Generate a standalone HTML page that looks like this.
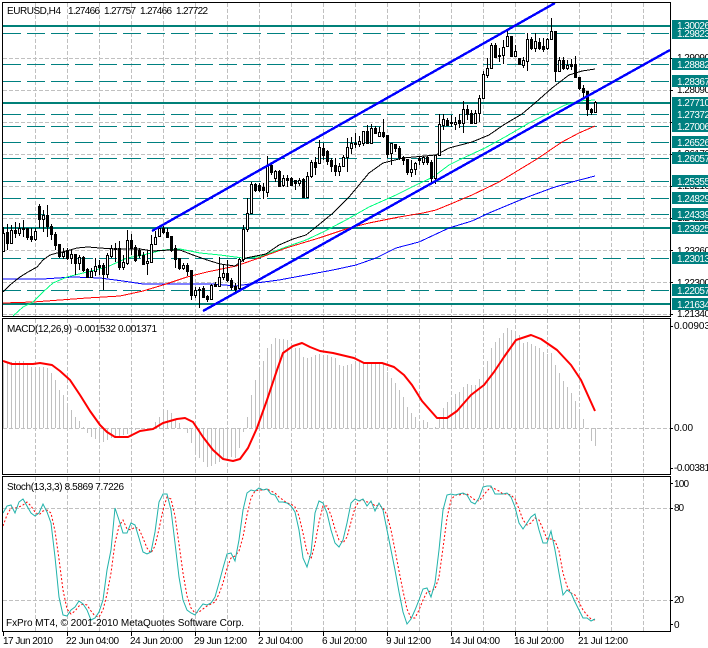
<!DOCTYPE html>
<html><head><meta charset="utf-8"><title>EURUSD,H4</title>
<style>html,body{margin:0;padding:0;background:#fff}svg{display:block}text{font-family:"Liberation Sans",sans-serif;font-size:10px;fill:#000}</style></head>
<body>
<svg width="708" height="648" viewBox="0 0 708 648" xmlns="http://www.w3.org/2000/svg">
<rect width="708" height="648" fill="#fff"/>
<!-- grid -->
<g stroke="#c0c0c0" fill="none" stroke-dasharray="4 2" shape-rendering="crispEdges">
<path d="M35.5 3V316M67.5 3V316M99.5 3V316M131.5 3V316M163.5 3V316M195.5 3V316M227.5 3V316M259.5 3V316M291.5 3V316M323.5 3V316M355.5 3V316M387.5 3V316M419.5 3V316M451.5 3V316M483.5 3V316M515.5 3V316M547.5 3V316M579.5 3V316M611.5 3V316M643.5 3V316"/>
<path d="M35.5 319V474M67.5 319V474M99.5 319V474M131.5 319V474M163.5 319V474M195.5 319V474M227.5 319V474M259.5 319V474M291.5 319V474M323.5 319V474M355.5 319V474M387.5 319V474M419.5 319V474M451.5 319V474M483.5 319V474M515.5 319V474M547.5 319V474M579.5 319V474M611.5 319V474M643.5 319V474"/>
<path d="M35.5 477V631M67.5 477V631M99.5 477V631M131.5 477V631M163.5 477V631M195.5 477V631M227.5 477V631M259.5 477V631M291.5 477V631M323.5 477V631M355.5 477V631M387.5 477V631M419.5 477V631M451.5 477V631M483.5 477V631M515.5 477V631M547.5 477V631M579.5 477V631M611.5 477V631M643.5 477V631"/>
<path d="M3 58.5H670M3 90.5H670M3 122.5H670M3 154.5H670M3 186.5H670M3 218.5H670M3 250.5H670M3 282.5H670M3 314.5H670M3 428.5H670M3 508.5H670M3 600.5H670"/>
</g>
<!-- teal levels -->
<g fill="#008078"><rect x="3" y="25" width="667" height="2"/><rect x="3" y="102" width="667" height="2"/><rect x="3" y="227" width="667" height="2"/><rect x="3" y="303" width="667" height="2"/></g>
<path stroke="#008080" fill="none" stroke-dasharray="18 6" shape-rendering="crispEdges" d="M3 33.5H670M3 64.5H670M3 81.5H670M3 114.5H670M3 126.5H670M3 142.5H670M3 158.5H670M3 181.5H670M3 198.5H670M3 214.5H670M3 258.5H670M3 290.5H670"/>
<!-- moving averages -->
<g fill="none" shape-rendering="crispEdges">
<path stroke="#0000ff" d="M3 279L43 279L73 277L100 278L123 281L143 284L167 284L190 284L213 284L236 286L256 283L279 280L306 275L333 270L356 265L376 258L396 248L419 242L449 228L472 221L489 213L525 198L552 188L572 182L595 176"/>
<path stroke="#ff0000" d="M3 303L33 302L60 300L87 298L120 296L143 291L163 285L187 277L207 272L236 266L259 258L286 248L319 238L349 228L369 223L399 217L423 213L436 210L453 203L472 195L499 182L537 159L562 142L579 133L595 126"/>
<path stroke="#00ff7f" d="M13 316L23 307L33 302L43 292L53 283L67 277L83 273L107 267L127 258L143 255L163 250L180 249L200 253L220 255L243 258L259 257L286 247L306 240L323 232L346 220L369 207L396 195L416 185L433 177L449 165L459 160L472 154L485 148L505 137L529 123L549 113L565 105L579 101L595 100"/>
<path stroke="#000" d="M3 292L10 285L20 277L28 272L37 267L43 260L50 255L57 253L63 252L77 248L88 247L100 248L113 249L127 249L140 249L153 251L170 250L180 250L193 255L207 260L220 264L235 266L246 258L266 254L279 245L293 239L306 235L316 227L333 213L349 197L369 173L383 163L403 158L436 155L449 148L472 142L489 135L505 124L522 114L535 103L552 88L569 75L582 71L595 69"/>
</g>
<!-- candles -->
<path stroke="#000" fill="none" shape-rendering="crispEdges" d="M3.5 227V251M7.5 224V250M11.5 225V243M15.5 222V238M19.5 223V236M23.5 220V237M27.5 228V240M31.5 228V242M35.5 228V241M39.5 204V228M43.5 210V232M47.5 205V237M51.5 224V240M55.5 232V250M59.5 244V258M63.5 248V259M67.5 248V260M71.5 250V264M75.5 254V275M79.5 255V270M83.5 256V272M87.5 268V278M91.5 268V278M95.5 258V276M99.5 260V275M103.5 263V290M107.5 253V278M111.5 245V258M115.5 243V262M119.5 241V270M123.5 255V270M127.5 230V265M131.5 234V255M135.5 245V262M139.5 248V258M143.5 252V265M147.5 250V275M151.5 235V263M155.5 231V245M159.5 227V237M163.5 226V234M167.5 228V238M171.5 236V252M175.5 245V268M179.5 258V270M183.5 263V270M187.5 263V276M191.5 270V300M195.5 287V298M199.5 287V308M203.5 286V298M207.5 295V302M211.5 284V300M215.5 282V287M219.5 257V287M223.5 265V280M227.5 260V282M231.5 278V290M235.5 283V293M239.5 258V292M243.5 225V262M247.5 198V232M251.5 182V214M255.5 183V192M259.5 183V192M263.5 183V199M267.5 156V197M271.5 162V175M275.5 170V182M279.5 170V187M283.5 175V187M287.5 175V187M291.5 177V186M295.5 180V190M299.5 178V186M303.5 178V198M307.5 172V198M311.5 160V178M315.5 157V175M319.5 140V164M323.5 143V160M327.5 150V165M331.5 158V172M335.5 158V176M339.5 163V176M343.5 155V167M347.5 138V172M351.5 137V154M355.5 133V148M359.5 136V147M363.5 131V146M367.5 125V143M371.5 124V143M375.5 126V134M379.5 127V136M383.5 119V138M387.5 135V158M391.5 143V165M395.5 144V152M399.5 146V160M403.5 156V165M407.5 159V175M411.5 160V177M415.5 162V175M419.5 157V165M423.5 156V165M427.5 156V165M431.5 160V182M435.5 155V184M439.5 114V156M443.5 114V130M447.5 118V126M451.5 115V127M455.5 117V130M459.5 114V128M463.5 101V133M467.5 105V120M471.5 110V124M475.5 110V124M479.5 95V122M483.5 71V99M487.5 58V78M491.5 43V69M495.5 43V58M499.5 48V62M503.5 40V64M507.5 30V47M511.5 36V57M515.5 45V57M519.5 58V65M523.5 57V68M527.5 33V71M531.5 37V50M535.5 33V52M539.5 38V50M543.5 38V52M547.5 38V50M551.5 18V40M555.5 31V82M559.5 57V72M563.5 57V70M567.5 60V70M571.5 59V70M575.5 56V78M579.5 77V90M583.5 85V97M587.5 91V116M591.5 108V115M595.5 101V113"/>
<path stroke="#000" fill="#fff" shape-rendering="crispEdges" d="M2.5 233.5h2v18h-2zM10.5 230.5h2v13h-2zM18.5 228.5h2v5h-2zM34.5 231.5h2v8h-2zM42.5 215.5h2v4h-2zM62.5 252.5h2v4h-2zM70.5 254.5h2v4h-2zM78.5 257.5h2v6h-2zM90.5 271.5h2v6h-2zM94.5 266.5h2v5h-2zM106.5 255.5h2v19h-2zM110.5 248.5h2v8h-2zM122.5 262.5h2v5h-2zM126.5 240.5h2v23h-2zM146.5 261.5h2v2h-2zM150.5 244.5h2v18h-2zM154.5 237.5h2v7h-2zM158.5 228.5h2v8h-2zM182.5 265.5h2v3h-2zM194.5 290.5h2v5h-2zM210.5 285.5h2v14h-2zM218.5 277.5h2v9h-2zM222.5 273.5h2v4h-2zM238.5 259.5h2v29h-2zM242.5 229.5h2v30h-2zM246.5 213.5h2v16h-2zM250.5 184.5h2v29h-2zM266.5 165.5h2v27h-2zM274.5 171.5h2v7h-2zM282.5 178.5h2v7h-2zM298.5 180.5h2v3h-2zM306.5 176.5h2v21h-2zM310.5 162.5h2v14h-2zM318.5 147.5h2v16h-2zM338.5 166.5h2v5h-2zM342.5 157.5h2v9h-2zM346.5 147.5h2v10h-2zM350.5 143.5h2v5h-2zM358.5 141.5h2v3h-2zM362.5 131.5h2v12h-2zM370.5 128.5h2v15h-2zM378.5 132.5h2v4h-2zM390.5 143.5h2v10h-2zM410.5 169.5h2v3h-2zM414.5 163.5h2v6h-2zM422.5 157.5h2v5h-2zM434.5 155.5h2v23h-2zM438.5 124.5h2v31h-2zM442.5 119.5h2v6h-2zM454.5 122.5h2v2h-2zM462.5 109.5h2v14h-2zM474.5 113.5h2v10h-2zM478.5 98.5h2v15h-2zM482.5 74.5h2v24h-2zM486.5 68.5h2v7h-2zM490.5 45.5h2v23h-2zM502.5 47.5h2v8h-2zM506.5 36.5h2v10h-2zM514.5 51.5h2v5h-2zM522.5 60.5h2v5h-2zM526.5 39.5h2v22h-2zM534.5 41.5h2v7h-2zM546.5 39.5h2v9h-2zM550.5 31.5h2v8h-2zM558.5 60.5h2v11h-2zM566.5 65.5h2v3h-2zM594.5 102.5h2v10h-2z"/>
<path stroke="#000" fill="#000" shape-rendering="crispEdges" d="M6.5 232.5h2v11h-2zM14.5 230.5h2v3h-2zM22.5 228.5h2v1h-2zM26.5 228.5h2v9h-2zM30.5 236.5h2v3h-2zM38.5 206.5h2v13h-2zM46.5 215.5h2v11h-2zM50.5 226.5h2v8h-2zM54.5 234.5h2v11h-2zM58.5 244.5h2v12h-2zM66.5 250.5h2v8h-2zM74.5 254.5h2v9h-2zM82.5 257.5h2v13h-2zM86.5 269.5h2v8h-2zM98.5 265.5h2v2h-2zM102.5 265.5h2v9h-2zM114.5 248.5h2v1h-2zM118.5 248.5h2v19h-2zM130.5 240.5h2v8h-2zM134.5 247.5h2v13h-2zM138.5 250.5h2v5h-2zM142.5 255.5h2v9h-2zM162.5 228.5h2v4h-2zM166.5 232.5h2v5h-2zM170.5 236.5h2v14h-2zM174.5 248.5h2v11h-2zM178.5 258.5h2v10h-2zM186.5 265.5h2v6h-2zM190.5 270.5h2v25h-2zM198.5 289.5h2v1h-2zM202.5 288.5h2v9h-2zM206.5 296.5h2v3h-2zM214.5 284.5h2v2h-2zM226.5 273.5h2v7h-2zM230.5 280.5h2v7h-2zM234.5 286.5h2v3h-2zM254.5 184.5h2v6h-2zM258.5 185.5h2v5h-2zM262.5 187.5h2v3h-2zM270.5 165.5h2v7h-2zM278.5 171.5h2v15h-2zM286.5 178.5h2v2h-2zM290.5 178.5h2v7h-2zM294.5 180.5h2v3h-2zM302.5 179.5h2v18h-2zM314.5 162.5h2v5h-2zM322.5 148.5h2v7h-2zM326.5 151.5h2v10h-2zM330.5 160.5h2v6h-2zM334.5 165.5h2v6h-2zM354.5 143.5h2v1h-2zM366.5 131.5h2v12h-2zM374.5 128.5h2v5h-2zM382.5 132.5h2v4h-2zM386.5 135.5h2v19h-2zM394.5 144.5h2v4h-2zM398.5 148.5h2v9h-2zM402.5 157.5h2v3h-2zM406.5 159.5h2v13h-2zM418.5 158.5h2v2h-2zM426.5 157.5h2v5h-2zM430.5 162.5h2v16h-2zM446.5 120.5h2v5h-2zM450.5 122.5h2v1h-2zM458.5 120.5h2v3h-2zM466.5 109.5h2v5h-2zM470.5 113.5h2v10h-2zM494.5 45.5h2v12h-2zM498.5 55.5h2v1h-2zM510.5 36.5h2v20h-2zM518.5 58.5h2v6h-2zM530.5 39.5h2v9h-2zM538.5 42.5h2v6h-2zM542.5 46.5h2v3h-2zM554.5 31.5h2v40h-2zM562.5 60.5h2v8h-2zM570.5 64.5h2v2h-2zM574.5 64.5h2v13h-2zM578.5 77.5h2v11h-2zM582.5 88.5h2v4h-2zM586.5 91.5h2v18h-2zM590.5 109.5h2v3h-2z"/>
<!-- trend lines -->
<g stroke="#0000ff" stroke-width="2.4" fill="none" shape-rendering="crispEdges">
<path d="M152 231L555 3"/><path d="M203 311L670 50"/>
</g>
<!-- MACD histogram -->
<path stroke="#c0c0c0" fill="none" shape-rendering="crispEdges" d="M3.5 428V363M7.5 428V362M11.5 428V362M15.5 428V361M19.5 428V361M23.5 428V361M27.5 428V365M31.5 428V367M35.5 428V367M39.5 428V367M43.5 428V367M47.5 428V368M51.5 428V373M55.5 428V380M59.5 428V390M63.5 428V395M67.5 428V404M71.5 428V410M75.5 428V417M79.5 428V421M83.5 428V427M87.5 428V433M91.5 428V437M95.5 428V439M99.5 428V442M103.5 428V442M107.5 428V440M111.5 428V438M115.5 428V437M119.5 428V436M123.5 428V435M127.5 428V434M131.5 428V433M135.5 428V430M139.5 428V429M155.5 428V422M159.5 428V417M163.5 428V410M167.5 428V410M171.5 428V413M175.5 428V420M179.5 428V423M187.5 428V433M191.5 428V443M195.5 428V452M199.5 428V458M203.5 428V462M207.5 428V467M211.5 428V466M215.5 428V464M219.5 428V462M223.5 428V459M227.5 428V457M231.5 428V457M235.5 428V458M239.5 428V448M243.5 428V432M247.5 428V417M251.5 428V395M255.5 428V380M259.5 428V370M263.5 428V361M267.5 428V348M271.5 428V344M275.5 428V338M279.5 428V339M283.5 428V339M287.5 428V340M291.5 428V344M295.5 428V348M299.5 428V348M303.5 428V357M307.5 428V358M311.5 428V357M315.5 428V355M319.5 428V354M323.5 428V355M327.5 428V355M331.5 428V357M335.5 428V358M339.5 428V365M343.5 428V366M347.5 428V365M351.5 428V364M355.5 428V363M359.5 428V362M363.5 428V362M367.5 428V362M371.5 428V362M375.5 428V362M379.5 428V362M383.5 428V363M387.5 428V372M391.5 428V378M395.5 428V383M399.5 428V390M403.5 428V397M407.5 428V407M411.5 428V413M415.5 428V417M419.5 428V422M423.5 428V420M427.5 428V422M435.5 428V427M439.5 428V417M443.5 428V408M447.5 428V402M451.5 428V399M455.5 428V394M459.5 428V392M463.5 428V387M467.5 428V384M471.5 428V385M475.5 428V385M479.5 428V379M483.5 428V370M487.5 428V361M491.5 428V348M495.5 428V342M499.5 428V338M503.5 428V333M507.5 428V328M511.5 428V330M515.5 428V332M519.5 428V335M523.5 428V343M527.5 428V342M531.5 428V344M535.5 428V346M539.5 428V348M543.5 428V352M547.5 428V354M551.5 428V353M555.5 428V365M559.5 428V373M563.5 428V381M567.5 428V387M571.5 428V393M575.5 428V401M579.5 428V410M583.5 428V419M591.5 428V441M595.5 428V446"/>
<path stroke="#ff0000" stroke-width="2" fill="none" stroke-linejoin="round" d="M3 361L12 364L33 364L40 363L52 365L60 371L70 380L80 395L90 411L100 425L107 432L115 437L128 437L140 431L153 429L163 423L177 419L185 418L193 422L203 437L213 450L223 459L233 461L240 459L248 448L257 428L267 400L277 370L283 353L293 346L302 343L310 347L320 351L333 353L354 358L364 363L382 363L394 367L404 375L412 385L422 401L437 418L447 418L457 411L471 395L484 385L494 372L504 357L516 340L531 335L541 339L557 350L571 365L581 380L595 411"/>
<!-- Stochastic -->
<path stroke="#ff0000" fill="none" stroke-dasharray="2 2" d="M3 526L7 515L11 508L15 508L19 507L23 505L27 502L31 506L35 512L39 515L43 511L47 510L51 513L55 531L59 559L63 590L67 609L71 614L75 611L79 606L83 604L87 605L91 611L95 616L99 617L103 610L107 594L111 573L115 543L119 526L123 520L127 529L131 530L135 527L139 529L143 538L147 548L151 553L155 546L159 529L163 510L167 497L171 499L175 516L179 544L183 573L187 596L191 608L195 613L199 612L203 609L207 606L211 604L215 602L219 594L223 583L227 568L231 558L235 556L239 551L243 537L247 515L251 498L255 491L259 490L263 490L267 489L271 491L275 493L279 497L283 500L287 503L291 504L295 507L299 516L303 533L307 552L311 559L315 544L319 522L323 506L327 506L331 515L335 529L339 540L343 543L347 537L351 522L355 508L359 501L363 500L367 502L371 502L375 506L379 505L383 508L387 515L391 530L395 550L399 571L403 591L407 609L411 618L415 618L419 610L423 600L427 592L431 591L435 589L439 577L443 548L447 518L451 500L455 495L459 495L463 494L467 494L471 497L475 500L479 501L483 496L487 491L491 487L495 489L499 491L503 494L507 494L511 495L515 499L519 509L523 520L527 525L531 523L535 518L539 520L543 529L547 539L551 539L555 541L559 551L563 573L567 586L571 593L575 595L579 602L583 610L587 615L591 619L595 620"/>
<path stroke="#20b2aa" fill="none" d="M3 513L7 506L11 505L15 513L19 502L23 499L27 506L31 513L35 516L39 513L43 504L47 512L51 523L55 557L59 597L63 615L67 616L71 610L75 607L79 601L83 604L87 610L91 620L95 618L99 612L103 600L107 570L111 550L115 508L119 520L123 533L127 533L131 523L135 525L139 538L143 552L147 554L151 552L155 532L159 502L163 494L167 494L171 510L175 543L179 577L183 600L187 610L191 613L195 615L199 609L203 604L207 605L211 603L215 597L219 583L223 568L227 554L231 553L235 561L239 540L243 510L247 493L251 490L255 491L259 488L263 490L267 489L271 494L275 495L279 502L283 502L287 503L291 506L295 512L299 530L303 558L307 567L311 553L315 513L319 501L323 503L327 513L331 530L335 543L339 547L343 540L347 523L351 503L355 499L359 501L363 499L367 506L371 501L375 511L379 503L383 510L387 530L391 550L395 570L399 592L403 612L407 624L411 619L415 610L419 600L423 589L427 588L431 597L435 583L439 550L443 510L447 495L451 494L455 495L459 494L463 493L467 495L471 502L475 504L479 498L483 487L487 486L491 486L495 494L499 494L503 494L507 493L511 497L515 507L519 523L523 529L527 523L531 517L535 514L539 530L543 543L547 543L551 531L555 550L559 573L563 595L567 590L571 593L575 602L579 610L583 618L587 618L591 621L595 619"/>
<!-- frames -->
<g fill="none" stroke="#000" shape-rendering="crispEdges">
<rect x="2.5" y="2.5" width="668" height="314"/>
<rect x="2.5" y="318.5" width="668" height="156"/>
<rect x="2.5" y="476.5" width="668" height="155"/>
<path d="M670 58.5h3M670 90.5h3M670 122.5h3M670 154.5h3M670 186.5h3M670 218.5h3M670 250.5h3M670 282.5h3M670 314.5h3M670 326.5h3M670 428.5h3M670 468.5h3M670 483.5h3M670 508.5h3M670 600.5h3M670 624.5h3"/>
<path d="M3.5 632v4M67.5 632v4M131.5 632v4M195.5 632v4M259.5 632v4M323.5 632v4M387.5 632v4M451.5 632v4M515.5 632v4M579.5 632v4"/>
</g>
<!-- texts -->
<text x="7" y="14" textLength="54">EURUSD,H4</text>
<text x="68" y="14" textLength="32">1.27466</text><text x="104" y="14" textLength="32">1.27757</text><text x="140" y="14" textLength="32">1.27466</text><text x="176" y="14" textLength="32">1.27722</text>
<text x="7" y="332" textLength="150">MACD(12,26,9) -0.001532 0.001371</text>
<text x="7" y="490" textLength="117">Stoch(13,3,3) 8.5869 7.7226</text>
<text x="6" y="626" textLength="238">FxPro MT4, © 2001-2010 MetaQuotes Software Corp.</text>
<g>
<text x="677" y="61" textLength="33">1.29090</text><text x="677" y="93" textLength="33">1.28090</text><text x="677" y="125" textLength="33">1.27130</text><text x="677" y="157" textLength="33">1.26170</text><text x="677" y="189" textLength="33">1.25210</text><text x="677" y="221" textLength="33">1.24220</text><text x="677" y="254" textLength="33">1.23260</text><text x="677" y="286" textLength="33">1.22300</text><text x="677" y="317" textLength="33">1.21340</text>
</g>
<g fill="#008080">
<rect x="672" y="20" width="36" height="12"/><rect x="672" y="27" width="36" height="12"/><rect x="672" y="58" width="36" height="12"/><rect x="672" y="75" width="36" height="12"/><rect x="672" y="97" width="36" height="12"/><rect x="672" y="108" width="36" height="12"/><rect x="672" y="120" width="36" height="12"/><rect x="672" y="136" width="36" height="12"/><rect x="672" y="152" width="36" height="12"/><rect x="672" y="175" width="36" height="12"/><rect x="672" y="192" width="36" height="12"/><rect x="672" y="208" width="36" height="12"/><rect x="672" y="222" width="36" height="12"/><rect x="672" y="252" width="36" height="12"/><rect x="672" y="284" width="36" height="12"/><rect x="672" y="298" width="36" height="12"/>
</g>
<g style="fill:#fff">
<text style="fill:#fff" x="677" y="29" textLength="33">1.30026</text><text style="fill:#fff" x="677" y="37" textLength="33">1.29823</text><text style="fill:#fff" x="677" y="68" textLength="33">1.28882</text><text style="fill:#fff" x="677" y="85" textLength="33">1.28367</text><text style="fill:#fff" x="677" y="106" textLength="33">1.27710</text><text style="fill:#fff" x="677" y="118" textLength="33">1.27372</text><text style="fill:#fff" x="677" y="130" textLength="33">1.27006</text><text style="fill:#fff" x="677" y="146" textLength="33">1.26526</text><text style="fill:#fff" x="677" y="162" textLength="33">1.26057</text><text style="fill:#fff" x="677" y="185" textLength="33">1.25355</text><text style="fill:#fff" x="677" y="202" textLength="33">1.24829</text><text style="fill:#fff" x="677" y="218" textLength="33">1.24339</text><text style="fill:#fff" x="677" y="232" textLength="33">1.23925</text><text style="fill:#fff" x="677" y="262" textLength="33">1.23013</text><text style="fill:#fff" x="677" y="294" textLength="33">1.22057</text><text style="fill:#fff" x="677" y="308" textLength="33">1.21634</text>
</g>
<text x="674" y="329" textLength="36">0.00903</text><text x="674" y="431" textLength="19">0.00</text><text x="674" y="471" textLength="36">-0.00381</text>
<text x="674" y="487" textLength="15">100</text><text x="674" y="511" textLength="10">80</text><text x="674" y="603" textLength="10">20</text><text x="674" y="628">0</text>
<text x="3" y="644" textLength="50">17 Jun 2010</text><text x="66" y="644" textLength="53">22 Jun 04:00</text><text x="130" y="644" textLength="53">24 Jun 20:00</text><text x="194" y="644" textLength="53">29 Jun 12:00</text><text x="258" y="644" textLength="45">2 Jul 04:00</text><text x="322" y="644" textLength="45">6 Jul 20:00</text><text x="386" y="644" textLength="45">9 Jul 12:00</text><text x="450" y="644" textLength="50">14 Jul 04:00</text><text x="514" y="644" textLength="50">16 Jul 20:00</text><text x="578" y="644" textLength="50">21 Jul 12:00</text>
</svg>
</body></html>
